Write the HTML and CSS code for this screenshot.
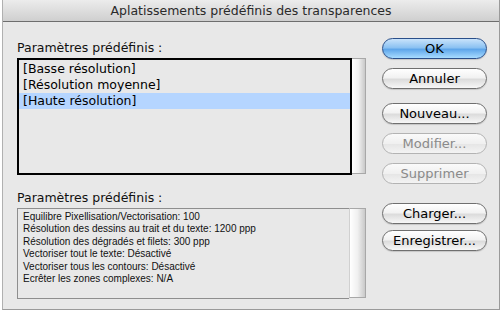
FILE: index.html
```html
<!DOCTYPE html>
<html lang="fr">
  <head>
    <meta charset="UTF-8" />
    <link rel="stylesheet" href="styles.css">
    <title>Aplatissements prédéfinis des transparences</title>
  </head>
  <body>
    <div class="window">
      <div class="titlebar">Aplatissements prédéfinis des transparences</div>

      <div class="content">
        <div class="left">
          <div class="label">Paramètres prédéfinis :</div>
          <div class="list-wrap">
            <div class="list">
              <div class="item">[Basse résolution]</div>
              <div class="item">[Résolution moyenne]</div>
              <div class="item selected">[Haute résolution]</div>
            </div>
            <div class="scrollbar"></div>
          </div>

          <div class="label second">Paramètres prédéfinis :</div>
          <div class="info-wrap">
            <div class="info">
              <div>Equilibre Pixellisation/Vectorisation: 100</div>
              <div>Résolution des dessins au trait et du texte: 1200 ppp</div>
              <div>Résolution des dégradés et filets: 300 ppp</div>
              <div>Vectoriser tout le texte: Désactivé</div>
              <div>Vectoriser tous les contours: Désactivé</div>
              <div>Ecrêter les zones complexes: N/A</div>
            </div>
            <div class="scrollbar"></div>
          </div>
        </div>

        <div class="buttons">
          <button class="btn default">OK</button>
          <button class="btn">Annuler</button>
          <button class="btn gap">Nouveau...</button>
          <button class="btn disabled">Modifier...</button>
          <button class="btn disabled">Supprimer</button>
          <button class="btn gap-big">Charger...</button>
          <button class="btn tight">Enregistrer...</button>
        </div>
      </div>
    </div>
  </body>
</html>
```

FILE: styles.css
```css
body {
  margin: 0;
  background-color: white;
  font-family: "DejaVu Sans", sans-serif;
}

.window {
  margin-left: 2px;
  width: 498px;
  height: 310px;
  background-color: #e8e8e8;
  border-right: 1px solid #9a9a9a;
  border-bottom: 1px solid #9a9a9a;
  border-left: 1px solid #b0b0b0;
  box-sizing: border-box;
}

.titlebar {
  height: 22px;
  line-height: 22px;
  text-align: center;
  font-size: 12.5px;
  color: #2a2a2a;
  background: linear-gradient(#ececec, #cfcfcf);
  border-bottom: 1px solid #6e6e6e;
  box-sizing: border-box;
}

.content {
  display: flex;
  padding: 18px 0 0 14px;
}

.left {
  width: 349px;
}

.label {
  font-size: 12.5px;
  line-height: 16px;
  color: #111;
  margin-bottom: 2px;
}

.label.second {
  margin-top: 15px;
}

.list-wrap,
.info-wrap {
  display: flex;
}

.list {
  flex: 1;
  height: 112px;
  border: 2px solid black;
  background-color: #e8e8e8;
  padding-top: 1px;
}

.item {
  font-size: 12.5px;
  line-height: 16px;
  padding-left: 4px;
  color: black;
}

.item.selected {
  background-color: #b5d5ff;
}

.scrollbar {
  width: 13px;
  border: 1px solid #a8a8a8;
  border-left: none;
  background: linear-gradient(to right, #ffffff, #f0f0f0 50%, #c9c9c9);
}

.list-wrap .scrollbar {
  height: 114px;
}

.info {
  flex: 1;
  height: 87px;
  border: 1px solid #8e8e8e;
  border-right: none;
  padding: 2px 0 0 5px;
  font-family: "Liberation Sans", sans-serif;
  font-size: 10px;
  line-height: 12.4px;
  color: #111;
}

.info-wrap .scrollbar {
  width: 15px;
  height: 88px;
  border-left: 1px solid #d0d0d0;
}

.buttons {
  display: flex;
  flex-direction: column;
  margin-left: 16px;
}

.btn {
  width: 105px;
  height: 21px;
  margin-bottom: 9px;
  border: 1px solid #6f6f6f;
  border-radius: 11px;
  background: linear-gradient(#ffffff, #f2f2f2 45%, #dcdcdc 55%, #f7f7f7);
  font-family: "DejaVu Sans", sans-serif;
  font-size: 13px;
  color: black;
  padding: 0;
  box-shadow: 0 1px 1px rgba(0, 0, 0, 0.15);
}

.btn.default {
  margin-top: -2px;
  border-color: #2a4f8a;
  background: linear-gradient(#c9e3fb, #8cc2f2 45%, #5fa6ea 55%, #a8dcff);
}

.btn.gap {
  margin-top: 5px;
}

.btn.disabled {
  color: #8a8a8a;
  border-color: #b3b3b3;
  background: linear-gradient(#fafafa, #f0f0f0 50%, #e6e6e6 55%, #f3f3f3);
  box-shadow: none;
}

.btn.gap-big {
  margin-top: 10px;
}

.btn.tight {
  margin-top: -3px;
}
```
